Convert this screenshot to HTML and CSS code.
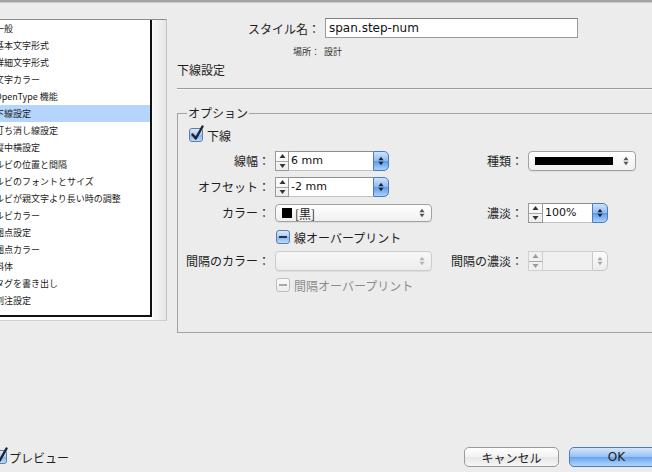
FILE: index.html
```html
<!DOCTYPE html>
<html lang="ja">
<head>
    <meta charset="UTF-8">
    <title>文字スタイルの編集</title>
    <link rel="stylesheet" href="styles.css">
</head>
<body>
    <svg class="sprite" width="0" height="0">
        <symbol id="updown" viewBox="0 0 7 11">
            <path d="M0.5 4.5 L3.5 0.5 L6.5 4.5 Z M0.5 6.5 L3.5 10.5 L6.5 6.5 Z"/>
        </symbol>
        <symbol id="up" viewBox="0 0 7 4">
            <path d="M0.5 4 L3.5 0 L6.5 4 Z"/>
        </symbol>
        <symbol id="down" viewBox="0 0 7 4">
            <path d="M0.5 0 L3.5 4 L6.5 0 Z"/>
        </symbol>
        <symbol id="tick" viewBox="0 0 14 16">
            <path d="M2.5 9.5 L5.8 13.5 L12.5 1.5" fill="none" stroke-width="2.4" stroke-linecap="round" stroke-linejoin="round"/>
        </symbol>
    </svg>

    <div class="window">
        <div class="topbar"></div>

        <div class="content">
            <!-- category list -->
            <div class="sidebar">
                <ul class="list">
                    <li>一般</li>
                    <li>基本文字形式</li>
                    <li>詳細文字形式</li>
                    <li>文字カラー</li>
                    <li>OpenType 機能</li>
                    <li class="selected">下線設定</li>
                    <li>打ち消し線設定</li>
                    <li>縦中横設定</li>
                    <li>ルビの位置と間隔</li>
                    <li>ルビのフォントとサイズ</li>
                    <li>ルビが親文字より長い時の調整</li>
                    <li>ルビカラー</li>
                    <li>圏点設定</li>
                    <li>圏点カラー</li>
                    <li>斜体</li>
                    <li>タグを書き出し</li>
                    <li>割注設定</li>
                </ul>
            </div>

            <div class="main">
                <div class="name-row">
                    <label class="name-label" for="styleName">スタイル名：</label>
                    <input class="name-input" type="text" id="styleName" value="span.step-num">
                </div>
                <div class="place-row">
                    <span class="place-label">場所：</span>
                    <span class="place-value">設計</span>
                </div>

                <h2 class="section-title">下線設定</h2>
                <div class="rule"></div>

                <fieldset class="options">
                    <legend>オプション</legend>

                    <label class="check underline-check">
                        <span class="box"><svg class="tick"><use href="#tick"/></svg></span>下線
                    </label>

                    <div class="grid">
                        <!-- row 1 -->
                        <span class="lbl">線幅：</span>
                        <div class="spin">
                            <span class="stepper"><span><svg><use href="#up"/></svg></span><span><svg><use href="#down"/></svg></span></span>
                            <span class="field">6 mm</span>
                            <span class="aqua"><svg><use href="#updown"/></svg></span>
                        </div>
                        <span class="lbl">種類：</span>
                        <div class="select">
                            <span class="line-sample"></span>
                            <svg class="arrows"><use href="#updown"/></svg>
                        </div>

                        <!-- row 2 -->
                        <span class="lbl">オフセット：</span>
                        <div class="spin">
                            <span class="stepper"><span><svg><use href="#up"/></svg></span><span><svg><use href="#down"/></svg></span></span>
                            <span class="field">-2 mm</span>
                            <span class="aqua"><svg><use href="#updown"/></svg></span>
                        </div>
                        <span class="skip"></span>

                        <!-- row 3 -->
                        <span class="lbl">カラー：</span>
                        <div class="select color-select">
                            <span class="swatch"></span><span class="select-text">[黒]</span>
                            <svg class="arrows"><use href="#updown"/></svg>
                        </div>
                        <span class="lbl">濃淡：</span>
                        <div class="spin small">
                            <span class="stepper"><span><svg><use href="#up"/></svg></span><span><svg><use href="#down"/></svg></span></span>
                            <span class="field">100%</span>
                            <span class="aqua"><svg><use href="#updown"/></svg></span>
                        </div>

                        <!-- row 4 -->
                        <label class="check in-grid">
                            <span class="box mixed"><span class="dash"></span></span>線オーバープリント
                        </label>

                        <!-- row 5 -->
                        <span class="lbl">間隔のカラー：</span>
                        <div class="select disabled">
                            <svg class="arrows"><use href="#updown"/></svg>
                        </div>
                        <span class="lbl">間隔の濃淡：</span>
                        <div class="spin small disabled">
                            <span class="stepper"><span><svg><use href="#up"/></svg></span><span><svg><use href="#down"/></svg></span></span>
                            <span class="field"></span>
                            <span class="aqua"><svg><use href="#updown"/></svg></span>
                        </div>

                        <!-- row 6 -->
                        <label class="check in-grid disabled">
                            <span class="box off"><span class="dash"></span></span>間隔オーバープリント
                        </label>
                    </div>
                </fieldset>
            </div>
        </div>

        <div class="footer">
            <label class="check preview">
                <span class="box"><svg class="tick"><use href="#tick"/></svg></span>プレビュー
            </label>
            <div class="buttons">
                <button type="button" class="btn">キャンセル</button>
                <button type="button" class="btn default">OK</button>
            </div>
        </div>
    </div>
</body>
</html>
```

FILE: styles.css
```css
* {
    box-sizing: border-box;
}
body {
    margin: 0;
    width: 652px;
    height: 472px;
    overflow: hidden;
    background: #ececec;
    font-family: "Noto Sans CJK JP", "DejaVu Sans", sans-serif;
    font-size: 12px;
    color: #1e1e1e;
}
.sprite {
    display: block;
    width: 0;
    height: 0;
    overflow: hidden;
}
.window {
    display: flex;
    flex-direction: column;
    height: 472px;
}
.topbar {
    height: 3px;
    background: #a2a2a2;
    border-bottom: 1px solid #cdcdcd;
}
.content {
    display: flex;
    flex: 1;
    min-height: 0;
}

/* category list */
.sidebar {
    width: 167px;
    height: 302px;
    margin-top: 16px;
    flex-shrink: 0;
    background: linear-gradient(90deg, #ffffff 0, #ffffff 152px, #f7f7f7 153px, #e6e6e6 166px);
    border-top: 1px solid #8c8c8c;
    border-right: 1px solid #c2c2c2;
    border-bottom: 1px solid #d0d0d0;
}
.list {
    list-style: none;
    margin: 0;
    padding: 0;
    width: 152px;
    height: 297px;
    background: #fff;
    border-right: 2px solid #111;
    border-bottom: 2px solid #111;
}
.list li {
    height: 17px;
    line-height: 17px;
    font-size: 9px;
    text-indent: -5px;
    white-space: nowrap;
    overflow: hidden;
    color: #1a1a1a;
}
.list li.selected {
    background: #b5d5ff;
}

/* right side */
.main {
    flex: 1;
    min-width: 0;
    padding-top: 15px;
}
.name-row {
    display: flex;
    align-items: center;
    height: 20px;
}
.name-label {
    width: 153px;
    text-align: right;
}
.name-input {
    width: 253px;
    height: 20px;
    margin: 0 0 0 5px;
    padding: 0 3px;
    border: 1px solid #9a9a9a;
    border-top-color: #7f7f7f;
    background: #fff;
    font-family: "DejaVu Sans", sans-serif;
    font-size: 12px;
    color: #111;
}
.place-row {
    display: flex;
    margin-top: 8px;
    font-size: 9px;
    line-height: 12px;
    color: #333;
}
.place-label {
    width: 153px;
    text-align: right;
}
.place-value {
    margin-left: 4px;
}
.section-title {
    margin: 4px 0 0 10px;
    font-size: 12px;
    font-weight: normal;
    line-height: 16px;
}
.rule {
    margin: 10px 0 0 10px;
    border-top: 1px solid #9c9c9c;
    border-bottom: 1px solid #f6f6f6;
}

.options {
    width: 520px;
    margin: 15px 0 0 10px;
    padding: 0 0 39px 11px;
    border: 1px solid #a3a3a3;
    border-right-color: transparent;
}
.options legend {
    margin-left: -2px;
    padding: 0 1px;
    font-size: 12px;
    line-height: 16px;
}

/* checkboxes */
.check {
    display: flex;
    align-items: center;
    gap: 4px;
    height: 16px;
    font-size: 12px;
}
.box {
    display: block;
    width: 14px;
    height: 14px;
    flex-shrink: 0;
    border: 1px solid #5a7eac;
    border-radius: 3px;
    background: linear-gradient(#dde9f9, #a9c8ef 50%, #86b4ec 51%, #bddbfb);
}
.box .tick {
    display: block;
    width: 14px;
    height: 16px;
    margin: -4px 0 0 0;
    overflow: visible;
    stroke: #1d2230;
}
.box .dash {
    display: block;
    width: 8px;
    height: 2px;
    margin: 5px auto 0;
    background: #26324a;
}
.box.off {
    border-color: #bdbdbd;
    background: linear-gradient(#fafafa, #ececec);
}
.box.off .dash {
    background: #a8a8a8;
}
.underline-check {
    margin-top: 6px;
}
.check.in-grid {
    grid-column: 2 / span 3;
    margin-left: 1px;
}
.check.disabled {
    color: #8c8c8c;
}

/* option grid */
.grid {
    display: grid;
    grid-template-columns: 92px 157px 86px 108px;
    grid-template-rows: 20px 20px 20px 16px 20px 16px;
    column-gap: 5px;
    row-gap: 6px;
    margin: 8px 0 0 -11px;
}
.lbl {
    align-self: center;
    text-align: right;
    white-space: nowrap;
    line-height: 16px;
}
.skip {
    grid-column: 3 / span 2;
}

.spin {
    display: flex;
    height: 20px;
}
.stepper {
    display: flex;
    flex-direction: column;
    width: 14px;
    border: 1px solid #9a9a9a;
    background: linear-gradient(#ffffff, #ededed);
}
.stepper span {
    flex: 1;
    display: flex;
    align-items: center;
    justify-content: center;
}
.stepper span + span {
    border-top: 1px solid #a8a8a8;
}
.stepper svg {
    width: 7px;
    height: 4px;
    fill: #333;
}
.field {
    width: 84px;
    padding: 0 2px;
    border-top: 1px solid #8e8e8e;
    border-bottom: 1px solid #c2c2c2;
    background: #fff;
    font-family: "DejaVu Sans", sans-serif;
    font-size: 11px;
    line-height: 18px;
    color: #111;
}
.aqua {
    display: flex;
    align-items: center;
    justify-content: center;
    width: 16px;
    border: 1px solid #4d7cbb;
    border-radius: 0 5px 5px 0;
    background: linear-gradient(#cfe3fb, #8fbcf2 48%, #5d9ae9 52%, #a9d0fb);
}
.aqua svg {
    width: 6px;
    height: 10px;
    fill: #1c2433;
}
.spin.small .stepper {
    width: 15px;
}
.spin.small .field {
    width: 49px;
}
.spin.disabled .stepper,
.spin.disabled .field {
    border-color: #cfcfcf;
    background: #f0f0f0;
}
.spin.disabled .stepper svg {
    fill: #9a9a9a;
}
.spin.disabled .aqua {
    border-color: #c8c8c8;
    background: linear-gradient(#fbfbfb, #ececec);
}
.spin.disabled .aqua svg {
    fill: #a8a8a8;
}

.select {
    display: flex;
    align-items: center;
    height: 20px;
    padding: 0 6px;
    border: 1px solid #a2a2a2;
    border-radius: 4px;
    background: linear-gradient(#ffffff, #f0f0f0);
    box-shadow: 0 1px 0 rgba(0, 0, 0, 0.06);
}
.select .arrows {
    width: 6px;
    height: 10px;
    margin-left: auto;
    fill: #555;
}
.line-sample {
    width: 78px;
    height: 8px;
    background: #000;
}
.color-select {
    height: 18px;
    align-self: center;
}
.swatch {
    width: 10px;
    height: 10px;
    background: #000;
}
.select-text {
    margin-left: 3px;
    font-size: 12px;
}
.select.disabled {
    border-color: #cbcbcb;
    background: linear-gradient(#f7f7f7, #ededed);
}
.select.disabled .arrows {
    fill: #b4b4b4;
}

/* footer */
.footer {
    display: flex;
    align-items: center;
    justify-content: space-between;
    height: 20px;
    margin-bottom: 5px;
}
.check.preview {
    margin-left: -7px;
    gap: 2px;
}
.buttons {
    display: flex;
    gap: 10px;
    margin-right: -12px;
}
.btn {
    width: 95px;
    height: 20px;
    padding: 0;
    border: 1px solid #9a9a9a;
    border-radius: 5px;
    background: linear-gradient(#ffffff, #f2f2f2 50%, #e6e6e6 51%, #f6f6f6);
    font-family: "Noto Sans CJK JP", "DejaVu Sans", sans-serif;
    font-size: 12px;
    color: #1e1e1e;
}
.btn.default {
    border-color: #4d7cbb;
    background: linear-gradient(#d4e6fc, #97c2f4 48%, #69a5ec 52%, #b0d6fc);
    font-family: "DejaVu Sans", sans-serif;
}
```
